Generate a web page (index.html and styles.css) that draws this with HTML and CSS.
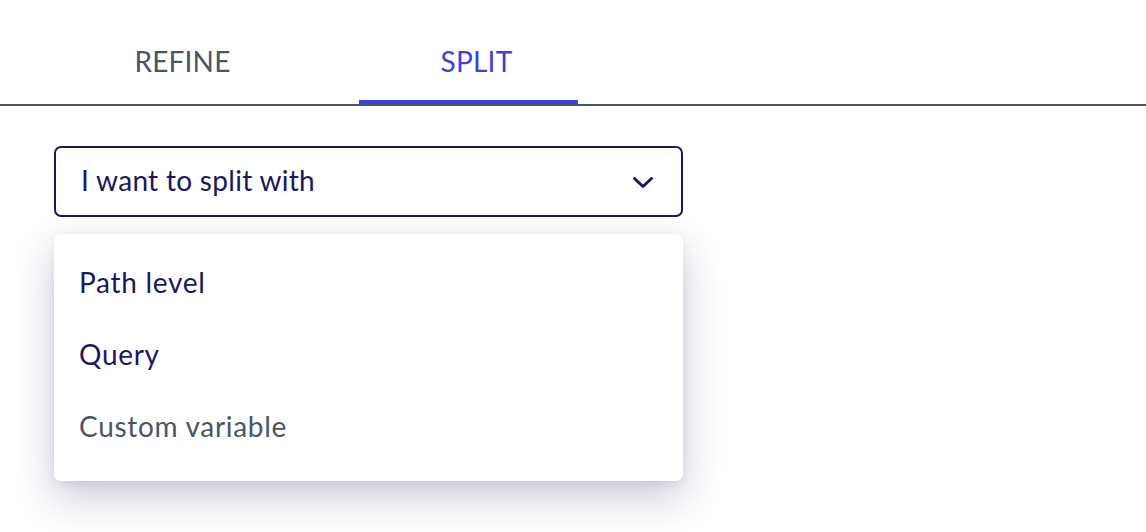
FILE: index.html
```html
<!DOCTYPE html>
<html lang="en">
<head>
<meta charset="utf-8">
<title>Split</title>
<link rel="stylesheet" href="styles.css">
</head>
<body>
<div class="tabs">
  <div class="tab">REFINE</div>
  <div class="tab tab-active">SPLIT</div>
</div>
<div class="content">
  <div class="select">
    <span class="select-label">I want to split with</span>
    <svg class="chevron" width="22" height="14" viewBox="0 0 22 14"><path d="M2.5 2.5 L11 10.5 L19.5 2.5" fill="none" stroke="#1c1760" stroke-width="3" stroke-linecap="round" stroke-linejoin="round"/></svg>
  </div>
  <div class="menu">
    <div class="menu-item">Path level</div>
    <div class="menu-item">Query</div>
    <div class="menu-item menu-item-muted">Custom variable</div>
  </div>
</div>
</body>
</html>
```

FILE: styles.css
```css
html, body {
  margin: 0;
  padding: 0;
  background: #ffffff;
}
body {
  font-family: Lato, "Open Sans", Arial, sans-serif;
  color: #1c1760;
  min-height: 532px;
}
.tabs {
  display: flex;
  gap: 67px;
  padding-left: 73px;
  height: 104px;
  border-bottom: 2px solid #4a5568;
}
.tab {
  width: 219px;
  box-sizing: border-box;
  text-align: center;
  font-size: 28px;
  line-height: 28px;
  padding-top: 47px;
  color: #4a5568;
  letter-spacing: 0.2px;
}
.tab-active {
  color: #3b41dc;
  padding-left: 16px;
  border-bottom: 4px solid #3b41dc;
}
.content {
  padding: 40px 0 51px 54px;
}
.select {
  width: 629px;
  height: 71px;
  box-sizing: border-box;
  border: 2px solid #1c1760;
  border-radius: 7px;
  display: flex;
  align-items: center;
  justify-content: space-between;
  padding: 0 27px 4px 25px;
}
.select-label {
  font-size: 28px;
  letter-spacing: 0.3px;
  color: #1c1760;
}
.chevron {
  display: block;
  margin-top: 6px;
}
.menu {
  margin-top: 17px;
  width: 629px;
  box-sizing: border-box;
  background: #ffffff;
  border-radius: 7px;
  padding: 12px 0 19px;
  box-shadow: 0 16px 40px rgba(35, 35, 95, 0.24), 0 3px 10px rgba(35, 35, 95, 0.08);
}
.menu-item {
  height: 72px;
  display: flex;
  align-items: center;
  padding-left: 25px;
  font-size: 28px;
  letter-spacing: 0.7px;
  color: #1c1760;
}
.menu-item-muted {
  color: #4a5568;
}
```
